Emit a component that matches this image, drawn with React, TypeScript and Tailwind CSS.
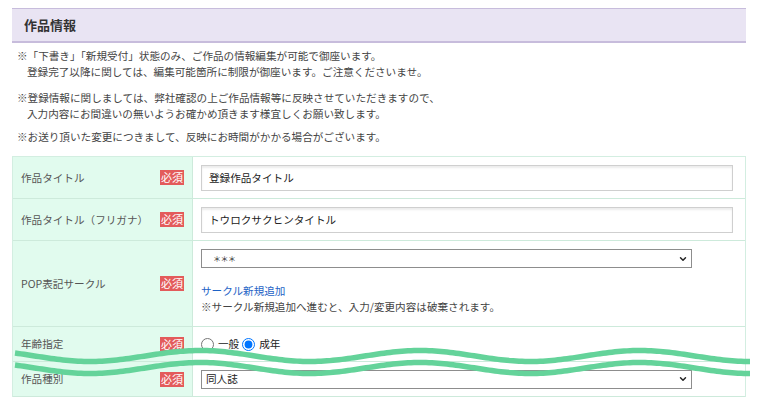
import { ChevronDown } from 'lucide-react';

const Badge = () => (
  <span className="inline-flex h-[15px] w-[24px] shrink-0 items-center justify-center bg-[#e35b5b] text-[11px] leading-none text-white">
    必須
  </span>
);

const Label = ({ text }: { text: string }) => (
  <div className="flex w-[180px] shrink-0 items-center justify-between border-r border-[#cdeadb] bg-[#e1fbee] pl-2 pr-2 text-[#555]">
    <span>{text}</span>
    <Badge />
  </div>
);

const FakeSelect = ({ children }: { children: React.ReactNode }) => (
  <div className="flex h-[19px] w-[491px] items-center justify-between border border-[#8d8d8d] bg-white pl-1 pr-[3px] text-[#222]">
    <span className="flex items-center">{children}</span>
    <ChevronDown size={10} strokeWidth={3.5} className="text-[#222]" />
  </div>
);

// wavy "cut" marks laid over the form
const wave = (mid: number) => {
  const pts: string[] = [];
  for (let x = 15; x <= 751; x += 3) {
    const y = mid + 5.5 * Math.cos(((x - 90) / 220) * Math.PI * 2);
    pts.push(`${x},${y.toFixed(2)}`);
  }
  return 'M' + pts.join(' L');
};

export default function App() {
  return (
    <div className="relative min-h-[398px] overflow-hidden bg-white font-['Noto_Sans_CJK_JP',sans-serif] text-[10.6px] leading-4 text-[#444]">
      <div className="ml-3 w-[734px] pt-2">
        <h2 className="flex h-[35px] items-center border-t border-b-2 border-[#c7bcdc] bg-[#e9e4f3] pl-3 text-[13px] font-bold text-[#333]">
          作品情報
        </h2>

        <div className="mt-[5px] pl-[5px]">
          <p>※「下書き」「新規受付」状態のみ、ご作品の情報編集が可能で御座います。</p>
          <p className="pl-[10px]">登録完了以降に関しては、編集可能箇所に制限が御座います。ご注意くださいませ。</p>
          <p className="mt-[10px]">※登録情報に関しましては、弊社確認の上ご作品情報等に反映させていただきますので、</p>
          <p className="pl-[10px]">入力内容にお間違いの無いようお確かめ頂きます様宜しくお願い致します。</p>
          <p className="mt-[7px]">※お送り頂いた変更につきまして、反映にお時間がかかる場合がございます。</p>
        </div>

        <div className="mt-[11px] border border-b-0 border-[#d3eee1]">
          <div className="flex h-[42px] border-b border-[#cdeadb]">
            <Label text="作品タイトル" />
            <div className="flex flex-1 items-center pl-2 pr-3">
              <div className="flex h-[26px] w-full items-center border border-[#cfcfcf] pl-[7px] text-[#222] shadow-[inset_0_2px_2px_rgba(0,0,0,0.08)]">
                登録作品タイトル
              </div>
            </div>
          </div>

          <div className="flex h-[42px] border-b border-[#cdeadb]">
            <Label text="作品タイトル（フリガナ）" />
            <div className="flex flex-1 items-center pl-2 pr-3">
              <div className="flex h-[26px] w-full items-center border border-[#cfcfcf] pl-[7px] text-[#222] shadow-[inset_0_2px_2px_rgba(0,0,0,0.08)]">
                トウロクサクヒンタイトル
              </div>
            </div>
          </div>

          <div className="flex h-[86px] border-b border-[#cdeadb]">
            <Label text="POP表記サークル" />
            <div className="flex-1 pl-2 pr-3 pt-2">
              <FakeSelect>
                <span className="pl-[7px] text-[8px] tracking-[-0.5px] text-[#333]">＊＊＊</span>
              </FakeSelect>
              <a className="mt-[15px] block text-[#1e63c6]">サークル新規追加</a>
              <p>※サークル新規追加へ進むと、入力/変更内容は破棄されます。</p>
            </div>
          </div>

          <div className="flex h-[35px] border-b border-[#cdeadb]">
            <Label text="年齢指定" />
            <div className="flex flex-1 items-center pl-2 text-[#222]">
              <label className="flex items-center gap-[4px]">
                <input type="radio" name="age" className="h-[13px] w-[13px]" />
                一般
              </label>
              <label className="ml-[3px] flex items-center gap-[4px]">
                <input type="radio" name="age" defaultChecked className="h-[13px] w-[13px]" />
                成年
              </label>
            </div>
          </div>

          <div className="flex h-[35px] border-b border-[#cdeadb]">
            <Label text="作品種別" />
            <div className="flex flex-1 items-center pl-2">
              <FakeSelect>同人誌</FakeSelect>
            </div>
          </div>
        </div>
      </div>

      <svg className="pointer-events-none absolute left-0 top-0" width="766" height="398">
        <path d={wave(356)} fill="none" stroke="#64d39a" strokeWidth="5.5" />
        <path d={wave(368)} fill="none" stroke="#64d39a" strokeWidth="5.5" />
      </svg>
    </div>
  );
}
